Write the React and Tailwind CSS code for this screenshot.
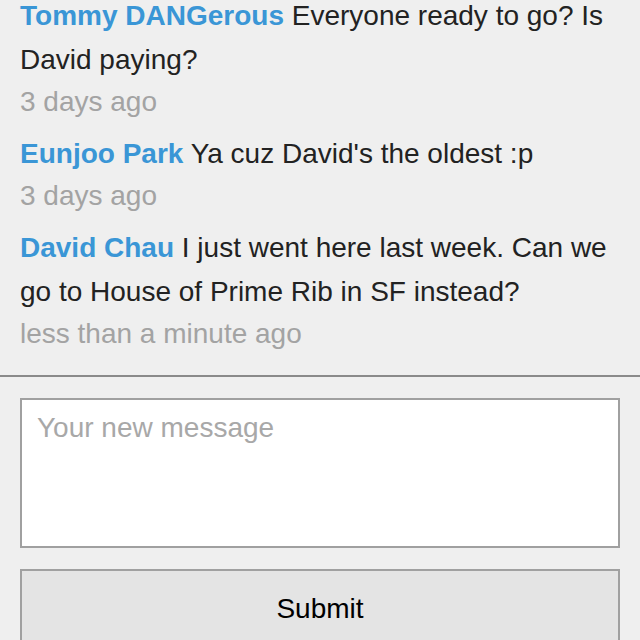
const messages = [
  {
    name: 'Tommy DANGerous',
    text: 'Everyone ready to go? Is David paying?',
    time: '3 days ago',
  },
  {
    name: 'Eunjoo Park',
    text: "Ya cuz David's the oldest :p",
    time: '3 days ago',
  },
  {
    name: 'David Chau',
    text: 'I just went here last week. Can we go to House of Prime Rib in SF instead?',
    time: 'less than a minute ago',
  },
];

export default function App() {
  return (
    <div
      className="w-[640px] h-[640px] overflow-hidden bg-[#efefef]"
      style={{ fontFamily: '"Liberation Sans", Arial, sans-serif' }}
    >
      {/* Message list */}
      <div className="-mt-[6px] px-5 flex flex-col gap-[10px] pb-[21px]">
        {messages.map((m) => (
          <div key={m.name}>
            <p className="text-[28px] leading-[44px] text-[#222]">
              <span className="font-bold text-[#3a96d6]">{m.name}</span> {m.text}
            </p>
            <p className="text-[28px] leading-[40px] text-[#a3a3a3]">{m.time}</p>
          </div>
        ))}
      </div>

      <div className="h-[2px] bg-[#8a8a8a]" />

      {/* Composer */}
      <div className="px-5 pt-[21px] flex flex-col gap-[21px]">
        <textarea
          className="h-[150px] w-full resize-none border-2 border-[#a0a0a0] bg-white px-[15px] py-[11px] text-[28px] leading-[34px] text-[#222] placeholder:text-[#a8a8a8] outline-none"
          placeholder="Your new message"
        />
        <button className="h-[80px] w-full border-2 border-[#a0a0a0] bg-[#e4e4e4] text-[28px] text-black">
          Submit
        </button>
      </div>
    </div>
  );
}
